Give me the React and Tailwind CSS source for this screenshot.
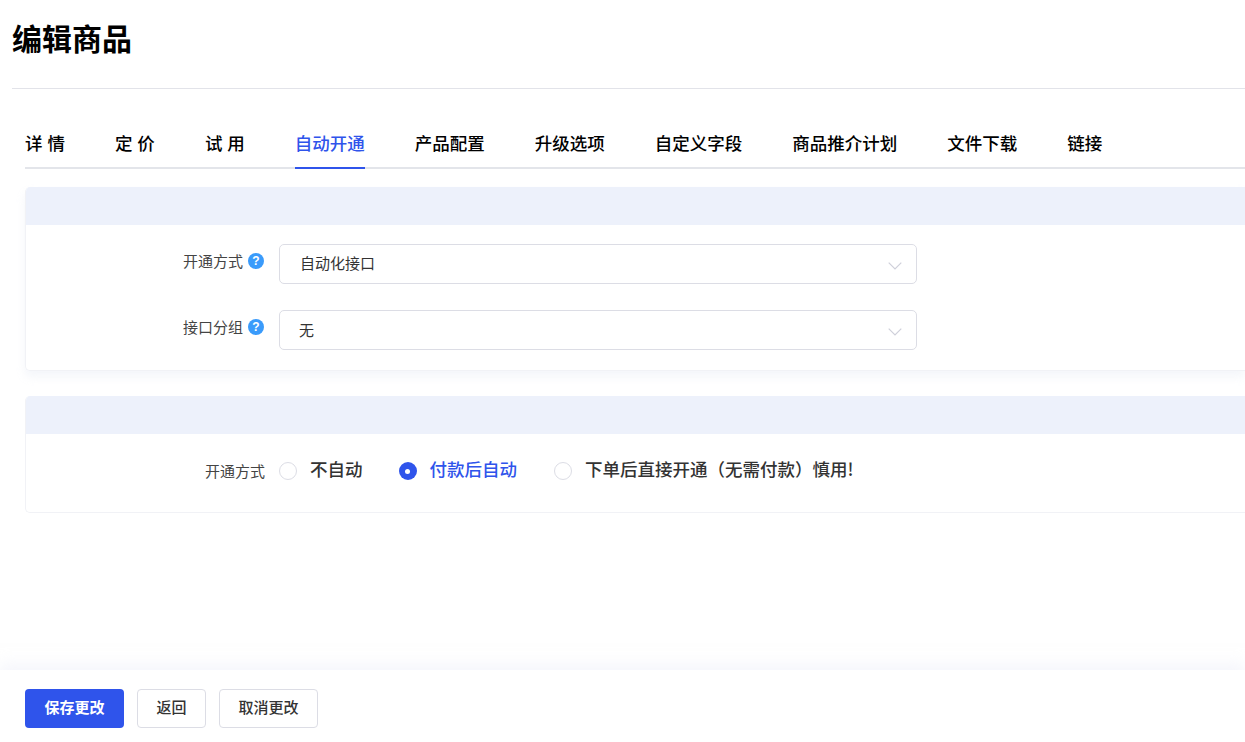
import React from "react";

const font = { fontFamily: '"Noto Sans CJK SC", "Noto Sans", sans-serif' };

function Help() {
  return (
    <span className="flex h-4 w-4 items-center justify-center rounded-full bg-[#3a9bfb] font-['Liberation_Sans'] text-[12px] font-bold leading-none text-white">?</span>
  );
}

function Chevron() {
  return (
    <svg width="14" height="8" viewBox="0 0 14 8" fill="none" className="mt-1">
      <path d="M0.7 0.7 L7 7 L13.3 0.7" stroke="#cfd0da" strokeWidth="1.2" />
    </svg>
  );
}

function SelectRow({ label, value, textClass }) {
  return (
    <div className="flex items-center">
      <div className="flex w-[253px] items-center justify-end gap-[5px] pb-[6px] pr-[15px] text-[15px] text-[#444]">
        <span className="pt-[1px]">{label}</span>
        <Help />
      </div>
      <div className="flex h-10 w-[638px] items-center justify-between rounded-[5px] border border-[#dcdde5] bg-white pr-[14px] text-[15px] text-[#333]">
        <span className={textClass}>{value}</span>
        <Chevron />
      </div>
    </div>
  );
}

function Radio({ checked, label, className }) {
  return (
    <div className={"flex items-center gap-[13px] " + className}>
      {checked ? (
        <span className="flex h-[18px] w-[18px] items-center justify-center rounded-full bg-[#2f54eb]">
          <span className="h-[5px] w-[5px] rounded-full bg-white" />
        </span>
      ) : (
        <span className="h-[18px] w-[18px] rounded-full border border-[#dcdde5] bg-white" />
      )}
      <span className={"pb-[4px] text-[17.5px] font-medium leading-6 " + (checked ? "text-[#2f54eb]" : "text-[#333]")}>{label}</span>
    </div>
  );
}

const tabs = ["详 情", "定 价", "试 用", "自动开通", "产品配置", "升级选项", "自定义字段", "商品推介计划", "文件下载", "链接"];

export default function App() {
  return (
    <div style={font} className="flex h-[742px] w-[1245px] flex-col overflow-hidden bg-white">
      <main className="flex-1 pl-3">
        <h1 className="flex h-[88px] items-start pt-[15px] text-[30px] font-bold leading-[44px] text-black">编辑商品</h1>
        <div className="h-px bg-[#e2e3e9]" />
        <div className="ml-[13px] mt-[34px] flex h-[46px] gap-[50px] border-b-2 border-[#e3e5ea]">
          {tabs.map((t) => (
            <div
              key={t}
              className={
                "-mb-[2px] flex h-[46px] items-center whitespace-pre border-b-2 pb-[4px] text-[17.5px] font-medium [word-spacing:1px] " +
                (t === "自动开通" ? "border-[#2f54eb] text-[#2f54eb]" : "border-transparent text-black")
              }
            >
              {t}
            </div>
          ))}
        </div>

        <section className="ml-[13px] mt-[18px] h-[184px] overflow-hidden rounded-tl-[5px] rounded-bl-[5px] border-l border-b border-[#f1f2f6] shadow-[0_6px_10px_rgba(230,234,245,0.45)]">
          <div className="h-[38px] bg-[#edf1fb]" />
          <div className="flex flex-col gap-[26px] pt-[19px]">
            <SelectRow label="开通方式" value="自动化接口" textClass="pb-[1px] pl-5" />
            <SelectRow label="接口分组" value="无" textClass="pl-[19px]" />
          </div>
        </section>

        <section className="ml-[13px] mt-[25px] h-[117px] overflow-hidden rounded-tl-[5px] rounded-bl-[5px] border-l border-b border-[#f1f2f6]">
          <div className="h-[38px] bg-[#edf1fb]" />
          <div className="flex items-center pt-[23px]">
            <div className="w-[239px] text-right text-[15px] text-[#444]">开通方式</div>
            <Radio className="ml-[14px]" label="不自动" />
            <Radio className="ml-[36px]" checked label="付款后自动" />
            <Radio className="ml-[37px]" label="下单后直接开通（无需付款）慎用!" />
          </div>
        </section>
      </main>

      <footer className="flex h-[72px] items-start gap-[13px] bg-white pl-[25px] pt-[19px] shadow-[0_-6px_14px_rgba(235,238,250,0.5)]">
        <button className="h-[39px] w-[99px] rounded-[4px] bg-[#2f54eb] pb-[2px] text-[15px] font-bold text-white">保存更改</button>
        <button className="h-[39px] w-[69px] rounded-[4px] border border-[#dcdde5] bg-white pb-[2px] text-[15px] font-medium text-[#333]">返回</button>
        <button className="h-[39px] w-[99px] rounded-[4px] border border-[#dcdde5] bg-white pb-[2px] text-[15px] font-medium text-[#333]">取消更改</button>
      </footer>
    </div>
  );
}
